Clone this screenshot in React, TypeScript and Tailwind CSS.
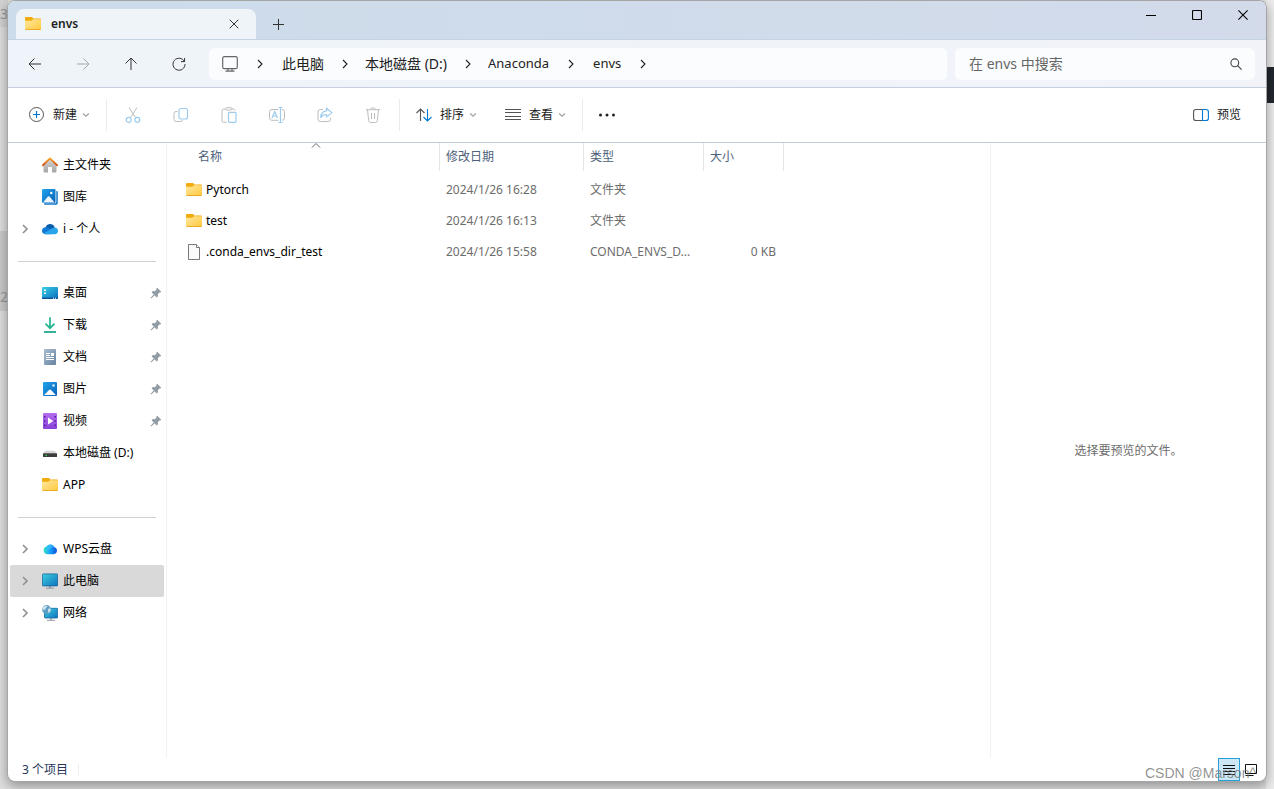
import React from "react";

type IconProps = { className?: string };

const Chevron = ({ className = "" }: IconProps) => (
  <svg viewBox="0 0 8 10" className={`h-[10px] w-2 shrink-0 ${className}`} fill="none" stroke="currentColor" strokeWidth="1.1">
    <path d="M2 1l4 4-4 4" />
  </svg>
);

const TreeChevron = () => (
  <svg viewBox="0 0 8 10" className="h-[10px] w-2 text-[#8f8f8f]" fill="none" stroke="currentColor" strokeWidth="1.6">
    <path d="M2 1l4 4-4 4" />
  </svg>
);

const Down = () => (
  <svg viewBox="0 0 8 6" className="h-[6px] w-2" fill="none" stroke="#999" strokeWidth="1.1">
    <path d="M1.2 1.5L4 4.3l2.800-2.800" />
  </svg>
);

const Folder = () => (
  <svg viewBox="0 0 16 16" className="size-4 shrink-0">
    <defs>
      <linearGradient id="folderFront" x1="0" y1="0" x2="1" y2="1">
        <stop offset="0" stopColor="#ffe8a0" />
        <stop offset="1" stopColor="#ffc83c" />
      </linearGradient>
    </defs>
    <path d="M0 2Q0 1 1 1h5.600q.6 0 1 .5l.8 1h6.600q1 0 1 1V6H0z" fill="#f2ab0c" />
    <path d="M0 4.800h5.800q.5 0 .9-.4l1-.8q.3-.3.8-.3H15q1 0 1 1V13q0 1-1 1H1q-1 0-1-1z" fill="url(#folderFront)" />
    <path d="M.2 13.200h15.600q-.3.800-.8.800H1q-.6 0-.8-.8z" fill="#e69f14" />
  </svg>
);

const HomeIcon = () => (
  <svg viewBox="0 0 16 16" className="size-4">
    <defs>
      <linearGradient id="wall" x1="0" y1="0" x2="0" y2="1">
        <stop offset="0" stopColor="#d6d6d6" />
        <stop offset="1" stopColor="#a6a6a6" />
      </linearGradient>
      <linearGradient id="roof" x1="0" y1="0" x2="0" y2="1">
        <stop offset="0" stopColor="#f5a623" />
        <stop offset="1" stopColor="#d9501c" />
      </linearGradient>
    </defs>
    <path d="M1.500 7L8 1.500 14.500 7v7.500q0 1-1 1H10V10H6v5.500H2.500q-1 0-1-1z" fill="url(#wall)" />
    <path d="M.9 8.200L8 1.400l7.100 6.800" fill="none" stroke="url(#roof)" strokeWidth="1.900" strokeLinecap="round" strokeLinejoin="round" />
  </svg>
);

const PictureArt = ({ stacked = false }: { stacked?: boolean }) => (
  <svg viewBox="0 0 16 16" className="size-4">
    <defs>
      <linearGradient id="sky" x1="0" y1="0" x2="1" y2="1">
        <stop offset="0" stopColor="#20a4ea" />
        <stop offset="1" stopColor="#0962ba" />
      </linearGradient>
    </defs>
    {stacked ? (
      <>
        <path d="M14.300 2h.5q1 0 1 1v11q0 1.700-1.700 1.700H3q-1 0-1-1v-.4h11q1.300 0 1.300-1.300z" fill="#1478c8" />
        <rect x="0" y="0" width="13.500" height="14" rx="1.200" fill="url(#sky)" />
        <path d="M1 13.600l4.700-5.800q1-1 2 0l4.800 5.800z" fill="#eef7fd" />
        <circle cx="9.300" cy="4" r="1.200" fill="#fff" />
      </>
    ) : (
      <>
        <rect x="1" y="1" width="14" height="14" rx="1" fill="url(#sky)" />
        <path d="M2.200 14l4.800-5q1-1 2 0l4.800 5z" fill="#fff" />
        <circle cx="11.500" cy="4.500" r="1.300" fill="#d6efff" />
      </>
    )}
  </svg>
);

const OneDrive = () => (
  <svg viewBox="0 0 16 16" className="size-4">
    <path d="M3.500 6.500C4.500 3.400 7 2.800 8.700 3c2.300.3 3.600 1.900 4 3.500L10 9z" fill="#0a5cad" />
    <path d="M3.600 13.200C1.300 13.200 0 11.600 0 9.800s1.500-3.600 3.800-3.500c1.200 0 2 .4 3 1l4 2.500-2 3.400z" fill="#0f78d4" />
    <path d="M7 9.200l3.300-2c2.800-1.600 5.700-.2 5.700 2.800 0 1.800-1.300 3.200-3.200 3.200H3.700c-.8 0-1.500-.2-2.100-.6z" fill="#28a4ea" />
  </svg>
);

const Desktop = () => (
  <svg viewBox="0 0 16 16" className="size-4">
    <defs>
      <linearGradient id="desk" x1="0" y1="0" x2="1" y2="1">
        <stop offset="0" stopColor="#38d0e6" />
        <stop offset="1" stopColor="#0b6cbd" />
      </linearGradient>
    </defs>
    <rect x="0" y="2" width="16" height="12" rx="1" fill="url(#desk)" />
    <path d="M2 4.500h2v1.500H2zM2 7.500h2V9H2z" fill="#fff" />
    <path d="M0 12.600h16V13q0 1-1 1H1q-1 0-1-1z" fill="#0d559b" />
    <path d="M11 12.700h1v1h-1zM13 12.700h1v1h-1z" fill="#fff" />
  </svg>
);

const Download = () => (
  <svg viewBox="0 0 16 16" className="size-4" fill="none" strokeWidth="1.700">
    <path d="M8 .2v10.500M3.500 6.700L8 11.200l4.500-4.500" stroke="#22b592" />
    <path d="M2 15h12" stroke="#14a58c" />
  </svg>
);

const Documents = () => (
  <svg viewBox="0 0 16 16" className="size-4">
    <defs>
      <linearGradient id="paper" x1="0" y1="0" x2="1" y2="1">
        <stop offset="0" stopColor="#a9bdd2" />
        <stop offset="1" stopColor="#6783a2" />
      </linearGradient>
    </defs>
    <rect x="2" y="0" width="12" height="16" rx="1" fill="url(#paper)" />
    <path d="M4 4.500h4M4 6.500h4M4 8.500h8M4 10.500h8" stroke="#fff" strokeWidth="1" />
    <rect x="9" y="4" width="3" height="3" fill="#fff" />
  </svg>
);

const Video = () => (
  <svg viewBox="0 0 16 16" className="size-4">
    <defs>
      <linearGradient id="film" x1="0" y1="0" x2="0" y2="1">
        <stop offset="0" stopColor="#b56df0" />
        <stop offset="1" stopColor="#8741d8" />
      </linearGradient>
    </defs>
    <rect x="1" y="0" width="14" height="16" rx="1" fill="url(#film)" />
    <path d="M2 3h1.500v1.500H2zM2 7.300h1.500v1.500H2zM2 11.500h1.500V13H2zM12.500 3H14v1.500h-1.500zM12.500 7.300H14v1.500h-1.500zM12.500 11.500H14V13h-1.500z" fill="#4c2391" />
    <path d="M6 4.600L11.200 8 6 11.400z" fill="#fff" />
  </svg>
);

const Drive = () => (
  <svg viewBox="0 0 16 16" className="size-4">
    <path d="M3.500 5.800h9L15 8.500H1z" fill="#d3d3d3" />
    <rect x="1" y="8.300" width="14" height="3.800" rx=".5" fill="#3c3c3c" />
    <path d="M3.500 9.700H5v1.200H3.500z" fill="#2fe04a" />
  </svg>
);

const WpsCloud = () => (
  <svg viewBox="0 0 16 16" className="size-4">
    <defs>
      <linearGradient id="wps" x1="0" y1="0" x2="1" y2="0">
        <stop offset="0" stopColor="#38e3c0" />
        <stop offset=".45" stopColor="#18a5fa" />
        <stop offset="1" stopColor="#0a50dc" />
      </linearGradient>
    </defs>
    <path d="M5 13.300a4 4 0 01-.5-7.800 4.500 4.500 0 018 .8 3.600 3.600 0 01-.8 7z" fill="url(#wps)" />
    <path d="M4.500 5.500a4.500 4.500 0 018 .8C8 6 7 9.500 5.500 10z" fill="#3cc4ff" opacity=".6" />
  </svg>
);

const PcIcon = () => (
  <svg viewBox="0 0 16 16" className="size-4">
    <defs>
      <linearGradient id="screen" x1="0" y1="0" x2="1" y2="1">
        <stop offset="0" stopColor="#3cd0e0" />
        <stop offset="1" stopColor="#0e72be" />
      </linearGradient>
    </defs>
    <path d="M6.800 13h2.400v2H6.800z" fill="#9aa3ac" />
    <path d="M4 15.200h8" stroke="#8f9aa5" strokeWidth="1" />
    <rect x=".4" y=".9" width="15.200" height="12" rx=".8" fill="url(#screen)" stroke="#19649c" strokeWidth=".8" />
  </svg>
);

const NetworkIcon = () => (
  <svg viewBox="0 0 16 16" className="size-4">
    <path d="M8.300 13h1.500v2H8.300z" fill="#9aa3ac" />
    <path d="M5 15.300h8" stroke="#8f9aa5" />
    <rect x="2.500" y="3.300" width="13.200" height="9.700" rx=".8" fill="url(#screen)" stroke="#19649c" strokeWidth=".8" />
    <circle cx="4.500" cy="4.500" r="4.400" fill="#5d9fc4" />
    <path d="M1 2.800C2.400.5 4.500.4 5.500 1.200 5 2.500 3.500 2.500 3.400 4.200 2.500 5 1.500 4.500.4 5zM6 4l2.500-.8c.7 2-.3 4-2 5z" fill="#d5e6ee" />
  </svg>
);

const Pin = () => (
  <svg viewBox="0 0 12 12" className="size-3 text-[#929ca4]" fill="currentColor">
    <path d="M7.300.8l3.900 3.900-.9.900-.9-.1-1.600 1.700.2 2-1.200 1.200-2.200-2.200L1.300 11.400.6 10.700l3.200-3.300-2.200-2.200 1.200-1.200 2 .2 1.700-1.600-.1-.9z" />
  </svg>
);

const PageIcon = () => (
  <svg viewBox="0 0 16 16" className="size-4 shrink-0" fill="#fafafa" stroke="#777" strokeWidth="1">
    <path d="M2.500.5h8l3 3v12h-11z" />
    <path d="M10.500.5v3h3" />
  </svg>
);

type Entry = { label: string; icon: React.ReactNode; open?: boolean; pin?: boolean; active?: boolean };

const groups: Entry[][] = [
  [
    { label: "主文件夹", icon: <HomeIcon /> },
    { label: "图库", icon: <PictureArt stacked /> },
    { label: "i - 个人", icon: <OneDrive />, open: true },
  ],
  [
    { label: "桌面", icon: <Desktop />, pin: true },
    { label: "下载", icon: <Download />, pin: true },
    { label: "文档", icon: <Documents />, pin: true },
    { label: "图片", icon: <PictureArt />, pin: true },
    { label: "视频", icon: <Video />, pin: true },
    { label: "本地磁盘 (D:)", icon: <Drive /> },
    { label: "APP", icon: <Folder /> },
  ],
  [
    { label: "WPS云盘", icon: <WpsCloud />, open: true },
    { label: "此电脑", icon: <PcIcon />, open: true, active: true },
    { label: "网络", icon: <NetworkIcon />, open: true },
  ],
];

const files = [
  { name: "Pytorch", date: "2024/1/26 16:28", type: "文件夹", size: "", icon: <Folder /> },
  { name: "test", date: "2024/1/26 16:13", type: "文件夹", size: "", icon: <Folder /> },
  { name: ".conda_envs_dir_test", date: "2024/1/26 15:58", type: "CONDA_ENVS_D...", size: "0 KB", icon: <PageIcon /> },
];

const NavButton = ({ label, dim, children }: { label: string; dim?: boolean; children: React.ReactNode }) => (
  <button aria-label={label} disabled={dim} className={`grid h-8 w-12 place-items-center ${dim ? "text-[#a3a8ad]" : "text-[#333]"}`}>
    <svg viewBox="0 0 16 16" className="size-4" fill="none" stroke="currentColor" strokeWidth="1">
      {children}
    </svg>
  </button>
);

const ToolButton = ({ label, children }: { label: string; children: React.ReactNode }) => (
  <button aria-label={label} disabled className="grid h-8 w-12 place-items-center">
    <svg viewBox="0 0 16 16" className="size-4" fill="none" stroke="#bdbdbd" strokeWidth="1">
      {children}
    </svg>
  </button>
);

const Divider = () => <span className="h-8 w-px bg-[#ebebeb]" />;

function TitleBar() {
  return (
    <div className="flex h-[39px] justify-between border-b border-[#c5d3e6] bg-linear-to-r from-[#ccdcea] to-[#d3dbeb] pl-2">
      <div className="flex pt-2">
        <div className="flex w-60 items-center rounded-t-lg bg-[#eff4f9] pr-[14px] pl-[9px]">
          <Folder />
          <span className="ml-[10px] flex-1 text-xs font-semibold text-[#222]">envs</span>
          <button aria-label="关闭标签页" className="grid size-4 place-items-center text-[#333]">
            <svg viewBox="0 0 10 10" className="size-[10px]" fill="none" stroke="currentColor">
              <path d="M.7.700l8.600 8.600M9.300.700L.700 9.300" />
            </svg>
          </button>
        </div>
        <button aria-label="新建标签页" className="grid w-11 place-items-center text-[#333]">
          <svg viewBox="0 0 11 11" className="size-[11px]" fill="none" stroke="currentColor">
            <path d="M5.500 0v11M0 5.500h11" />
          </svg>
        </button>
      </div>
      <div className="flex h-7 text-black">
        {[
          { label: "最小化", d: "M0 5.500h10" },
          { label: "最大化", d: "M1.500.500h7q1 0 1 1v7q0 1-1 1h-7q-1 0-1-1v-7q0-1 1-1z" },
          { label: "关闭", d: "M.400.400l9.200 9.200M9.600.400L.400 9.600" },
        ].map((c) => (
          <button key={c.label} aria-label={c.label} className="grid h-7 w-[46px] place-items-center">
            <svg viewBox="0 0 10 10" className="size-[10px]" fill="none" stroke="currentColor" strokeWidth="1.100">
              <path d={c.d} />
            </svg>
          </button>
        ))}
      </div>
    </div>
  );
}

function AddressBar() {
  return (
    <div className="flex h-12 items-center border-b border-[#c6cfdf] bg-linear-to-r from-[#eef4f9] to-[#f1f3f9] pr-[11px] pl-[3px]">
      <NavButton label="后退"><path d="M14 8H2.200M7.500 2.500L2 8l5.500 5.500" /></NavButton>
      <NavButton label="前进" dim><path d="M2 8h11.800M8.500 2.500L14 8l-5.500 5.500" /></NavButton>
      <NavButton label="向上"><path d="M8 14V2.200M2.500 7.500L8 2l5.500 5.500" /></NavButton>
      <NavButton label="刷新"><path d="M13.300 5.400A6 6 0 1014 8M13.600 2v3.600H10" /></NavButton>
      <nav aria-label="路径" className="ml-[6px] flex h-8 flex-1 items-center rounded-md bg-[#fbfcfe] pl-[13px] text-sm text-[#222]">
        <svg viewBox="0 0 16 16" className="size-4" fill="none" stroke="#666" strokeWidth="1.200">
          <rect x=".7" y=".7" width="14.600" height="12" rx="1.800" />
          <path d="M6 12.500v2.500M10 12.500v2.500M3.500 15.200h9" />
        </svg>
        <span className="grid w-11 place-items-center"><Chevron /></span>
        <a href="#pc">此电脑</a>
        <span className="grid w-[41px] place-items-center"><Chevron /></span>
        <a href="#d">本地磁盘 (D:)</a>
        <span className="grid w-[41px] place-items-center"><Chevron /></span>
        <a href="#anaconda" className="text-[13px]">Anaconda</a>
        <span className="grid w-11 place-items-center"><Chevron /></span>
        <a href="#envs" className="text-[13px]">envs</a>
        <span className="grid w-11 place-items-center"><Chevron /></span>
      </nav>
      <label className="ml-2 flex h-8 w-[300px] items-center rounded-md bg-[#fbfcfe] pr-3 pl-[14px]">
        <input aria-label="搜索" placeholder="在 envs 中搜索" className="min-w-0 flex-1 bg-transparent text-sm outline-none placeholder:text-[#666]" />
        <svg viewBox="0 0 14 14" className="size-[14px]" fill="none" stroke="#444" strokeWidth="1.100">
          <circle cx="5.800" cy="5.800" r="3.900" />
          <path d="M8.600 8.600l4 4" />
        </svg>
      </label>
    </div>
  );
}

function Toolbar() {
  return (
    <div className="flex h-[55px] items-center border-b border-[#c0cbdd] bg-white pr-[25px] pl-[21px] text-xs text-[#1b1b1b]">
      <button className="flex h-8 items-center pr-4">
        <svg viewBox="0 0 16 16" className="size-4" fill="none" stroke="#555" strokeWidth="1">
          <circle cx="7.500" cy="7.500" r="7" />
          <path d="M7.500 4v7M4 7.500h7" stroke="#0078d4" strokeWidth="1.200" />
        </svg>
        <span className="mr-[5px] ml-2">新建</span>
        <Down />
      </button>
      <Divider />
      <div className="flex px-[2px]">
        <ToolButton label="剪切">
          <path d="M4 .5l6.500 10M12 .5l-6.500 10" />
          <g stroke="#9ccbee" strokeWidth="1.200"><circle cx="3.700" cy="12.800" r="2.500" /><circle cx="12.300" cy="12.800" r="2.500" /></g>
        </ToolButton>
        <ToolButton label="复制">
          <path d="M4.500 4.500H3q-2 0-2 2v6q0 2 2 2h4.500q2 0 2-1.500" />
          <rect x="6" y="1.500" width="8.500" height="10.500" rx="2" stroke="#9ccbee" strokeWidth="1.200" />
        </ToolButton>
        <ToolButton label="粘贴">
          <path d="M4.500 2H2.500Q1 2 1 3.500v10.500q0 1.300 1.500 1.300h3M11 2h1.500Q14 2 14 3.500" />
          <rect x="4.500" y=".700" width="6.500" height="2.300" rx="1.100" />
          <rect x="7.500" y="5.300" width="7.500" height="10" rx="1" stroke="#9ccbee" strokeWidth="1.200" />
        </ToolButton>
        <ToolButton label="重命名">
          <path d="M9.500 2.500H3q-2.500 0-2.500 2.300v6Q.500 13.300 3 13.300h6.500M13 2.500q2.500 0 2.500 2.300v6q0 2.500-2.500 2.500" />
          <path d="M3 11l2.700-6.500L8.400 11M4 9h3.500M9.500.5h4M9.500 15.500h4M11.500.5v15" stroke="#9ccbee" strokeWidth="1.200" />
        </ToolButton>
        <ToolButton label="共享">
          <path d="M6 2.500H3.500Q1 2.500 1 5v7q0 2.500 2.500 2.500h7.500q2.500 0 2.500-2.500v-1" />
          <path d="M9.500 1.200L15 5.600l-5.500 4.300V7.500Q5.500 7.500 3.700 10.500 4 4.500 9.500 3.800z" stroke="#9ccbee" strokeWidth="1.200" strokeLinejoin="round" />
        </ToolButton>
        <ToolButton label="删除">
          <path d="M1 2.700h14M5.500 2.500Q5.800.8 8 .8t2.500 1.700M2.500 2.700l1.200 11q.2 1.800 1.800 1.800h5q1.600 0 1.800-1.800l1.200-11M6.500 6v6M9.500 6v6" />
        </ToolButton>
      </div>
      <Divider />
      <button className="ml-4 flex h-8 items-center">
        <svg viewBox="0 0 16 16" className="size-4" fill="none" strokeWidth="1.100">
          <path d="M4.500 14V2.500M.500 6l4-4 4 4" stroke="#555" />
          <path d="M11.500 2v11.500M7.500 10l4 4 4-4" stroke="#0078d4" />
        </svg>
        <span className="mr-[5px] ml-2">排序</span>
        <Down />
      </button>
      <button className="mr-4 ml-7 flex h-8 items-center">
        <svg viewBox="0 0 16 16" className="size-4" stroke="#555">
          <path d="M0 2.500h16M0 5.500h16M0 9.500h16M0 12.500h16" />
        </svg>
        <span className="mr-[5px] ml-2">查看</span>
        <Down />
      </button>
      <Divider />
      <button aria-label="更多" className="ml-4 grid h-8 w-4 place-items-center">
        <svg viewBox="0 0 16 4" className="h-1 w-4" fill="#222">
          <circle cx="1.500" cy="2" r="1.500" /><circle cx="8" cy="2" r="1.500" /><circle cx="14.500" cy="2" r="1.500" />
        </svg>
      </button>
      <button className="ml-auto flex h-8 items-center gap-2">
        <svg viewBox="0 0 16 16" className="size-4" fill="none" strokeWidth="1.100">
          <path d="M9.500 2.500H3Q.600 2.500.600 4.800v6.400Q.600 13.500 3 13.500h6.500" stroke="#555" />
          <path d="M9.500 2.500H13q2.400 0 2.400 2.300v6.400q0 2.300-2.400 2.300H9.500z" stroke="#0078d4" />
        </svg>
        预览
      </button>
    </div>
  );
}

function Sidebar() {
  return (
    <nav aria-label="导航窗格" className="w-[159px] shrink-0 border-r border-[#f2f2f2] px-[2px] pt-[6px] text-xs text-black">
      {groups.map((group, i) => (
        <React.Fragment key={i}>
          {i > 0 && (
            <div className="flex h-8 items-center px-2">
              <hr className="flex-1 border-[#d0d0d0]" />
            </div>
          )}
          <ul>
            {group.map((e) => (
              <li key={e.label}>
                <a href="#nav" className={`flex h-8 items-center rounded-xs pr-[2px] pl-[11px] ${e.active ? "bg-[#d9d9d9]" : ""}`}>
                  <span className="w-[21px]">{e.open && <TreeChevron />}</span>
                  {e.icon}
                  <span className="ml-[5px] flex-1 whitespace-nowrap">{e.label}</span>
                  {e.pin && <Pin />}
                </a>
              </li>
            ))}
          </ul>
        </React.Fragment>
      ))}
    </nav>
  );
}

function FileTable() {
  return (
    <main className="relative min-w-0 flex-1">
      <table className="w-[617px] table-fixed text-left text-xs text-[#6d6d6d]">
        <colgroup>
          <col className="w-[273px]" />
          <col className="w-36" />
          <col className="w-[120px]" />
          <col className="w-20" />
        </colgroup>
        <thead>
          <tr className="h-[31px] align-top text-[#4c607a]">
            {["名称", "修改日期", "类型", "大小"].map((h, i) => (
              <th key={h} className="p-0 font-normal">
                <div className={`flex h-7 items-center border-r border-[#e5e5e5] ${i === 0 ? "pl-[31px]" : "pl-[6px]"}`}>{h}</div>
              </th>
            ))}
          </tr>
        </thead>
        <tbody>
          {files.map((f) => (
            <tr key={f.name} className="h-[31px]">
              <td className="p-0 pl-[19px] text-black">
                <span className="flex items-center gap-1">{f.icon}{f.name}</span>
              </td>
              <td className="p-0 pl-[6px]">{f.date}</td>
              <td className="p-0 pl-[6px] whitespace-nowrap">{f.type}</td>
              <td className="p-0 pr-2 text-right">{f.size}</td>
            </tr>
          ))}
        </tbody>
      </table>
      <svg viewBox="0 0 10 6" className="absolute top-0 left-36 h-[6px] w-[10px]" fill="none" stroke="#666">
        <path d="M1 4.500l4-4 4 4" />
      </svg>
    </main>
  );
}

export default function App() {
  return (
    <div className="relative flex min-h-screen flex-col overflow-hidden bg-[#dedede] px-[7px] pb-[7px] font-['Noto_Sans','Noto_Sans_CJK_SC',sans-serif]">
      <div className="absolute top-0 left-0 h-[27px] w-2 bg-[#d2d2d2]" />
      <div className="absolute top-[231px] left-0 h-20 w-2 bg-[#cacaca]" />
      <span className="absolute top-1 left-0 text-sm text-[#999]">34</span>
      <span className="absolute top-[287px] left-0 text-sm text-[#999]">2</span>
      <div className="absolute top-0 right-0 h-full w-2 bg-[#ececec]" />
      <div className="absolute top-[67px] right-0 h-9 w-2 bg-[#22272e]" />
      <div className="relative flex flex-1 flex-col overflow-hidden rounded-lg border border-[#a5a5a5] bg-white shadow-[0_4px_12px_rgba(0,0,0,0.35)]">
        <TitleBar />
        <AddressBar />
        <Toolbar />
        <div className="flex flex-1">
          <Sidebar />
          <FileTable />
          <aside className="grid w-[276px] shrink-0 place-items-center border-l border-[#f2f2f2] text-xs text-[#6d6d6d]">
            选择要预览的文件。
          </aside>
        </div>
        <footer className="flex h-[23px] items-center justify-between pr-[7px] pl-[14px] text-xs text-[#26365c]">
          <span className="border-r border-[#eee] pr-[10px] leading-3">3 个项目</span>
          <div className="flex gap-[3px]">
            <button aria-label="详细信息" className="grid h-[23px] w-[22px] place-items-center border border-[#26a0da] bg-[#cce8f6]">
              <svg viewBox="0 0 12 12" className="size-3" stroke="#111"><path d="M0 1.500h12M0 4.500h12M0 7.500h12M0 10.500h12" /></svg>
            </button>
            <button aria-label="大图标" className="grid h-[23px] w-4 place-items-center">
              <svg viewBox="0 0 14 12" className="h-3 w-[14px]" fill="none" stroke="#111"><path d="M1.500.5h11v9h-11zM1.500 11.500h8" /></svg>
            </button>
          </div>
        </footer>
        <span className="pointer-events-none absolute right-[10px] bottom-0 font-['Liberation_Sans',sans-serif] text-sm leading-4 text-[#777]/80">CSDN @Marson^</span>
      </div>
    </div>
  );
}
